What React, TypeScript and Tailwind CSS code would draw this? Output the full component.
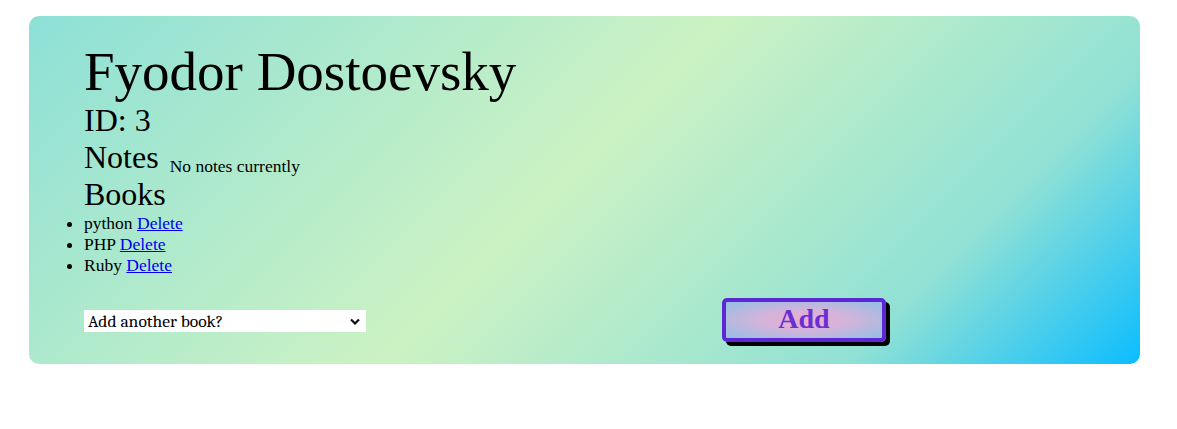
import React, { useState } from 'react';

const books = ['python', 'PHP', 'Ruby'];

const App: React.FC = () => {
  const [choice, setChoice] = useState('');

  return (
    <div className="pt-[16px] pl-[29px] font-['Liberation_Serif',serif] text-black">
      <div className="w-[1111px] rounded-[10px] bg-[linear-gradient(135deg,#8de0d7_0%,#ccf2c3_48%,#90e1d5_80%,#0bbdff_100%)] pl-[55px] pt-[26px] pb-[22px]">
        <h1 className="text-[55px] leading-[60px]">Fyodor Dostoevsky</h1>
        <h2 className="text-[32px] leading-[37px]">ID: 3</h2>
        <div className="flex items-baseline">
          <h2 className="text-[32px] leading-[37px]">Notes</h2>
          <span className="relative top-[4px] ml-[11px] text-[17.5px]">No notes currently</span>
        </div>
        <h2 className="text-[32px] leading-[37px]">Books</h2>
        <ul className="list-disc text-[17.5px] leading-[21px]">
          {books.map((b) => (
            <li key={b}>
              {b}{' '}
              <a href="#" className="text-[#0000ee] underline">
                Delete
              </a>
            </li>
          ))}
        </ul>
        <form className="mt-[22px] flex items-start" onSubmit={(e) => e.preventDefault()}>
          <div className="relative mt-[12px] h-[22px] w-[282px] bg-white">
            <select
              value={choice}
              onChange={(e) => setChoice(e.target.value)}
              className="h-[22px] w-full appearance-none border-0 bg-transparent pl-[4px] font-serif text-[17.5px] leading-[22px] text-black outline-none"
            >
              <option value="" className="font-serif">Add another book?</option>
              <option value="go" className="font-serif">Go</option>
              <option value="rust" className="font-serif">Rust</option>
            </select>
            {/* chevron */}
            <svg
              className="pointer-events-none absolute right-[6px] top-[8px]"
              width="10"
              height="7"
              viewBox="0 0 10 7"
            >
              <path d="M1 1.5 L5 5.5 L9 1.5" fill="none" stroke="#111" strokeWidth="2.2" />
            </svg>
          </div>
          <button
            type="submit"
            className="ml-[356px] h-[44px] w-[164px] rounded-[5px] border-4 border-[#5b28d3] bg-[radial-gradient(ellipse_at_center,#eaaccf_0%,#d3b3da_40%,#94bfe6_100%)] pb-[3px] font-['Liberation_Serif',serif] text-[28px] font-bold leading-none text-[#6a2fd2] shadow-[4px_4px_0_#000]"
          >
            Add
          </button>
        </form>
      </div>
    </div>
  );
};

export default App;
